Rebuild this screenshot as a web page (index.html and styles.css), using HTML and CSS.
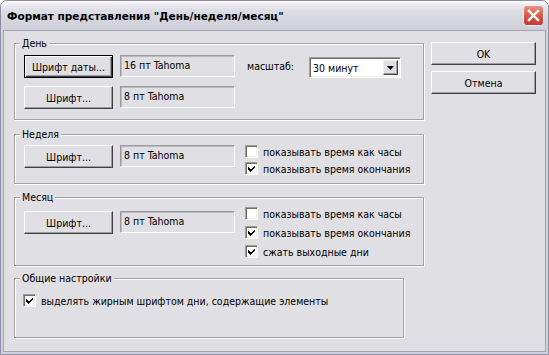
FILE: index.html
```html
<!DOCTYPE html>
<html>
<head>
    <meta charset="utf-8">
    <link rel="stylesheet" href="styles.css">
</head>
<body>
    <div class="window">
        <div class="titlebar">
            <span class="title">Формат представления "День/неделя/месяц"</span>
            <span class="close-btn">
                <svg width="21" height="21" viewBox="0 0 21 21">
                    <defs>
                        <linearGradient id="closeGrad" x1="0" y1="0" x2="0" y2="1">
                            <stop offset="0" stop-color="#ec9486"/>
                            <stop offset="0.5" stop-color="#d65a4d"/>
                            <stop offset="1" stop-color="#c13a2f"/>
                        </linearGradient>
                    </defs>
                    <rect x="0.5" y="0.5" width="20" height="20" rx="3" fill="url(#closeGrad)" stroke="#f4f4f8"/>
                    <path d="M6 6 L15 15 M15 6 L6 15" stroke="#fff" stroke-width="2.4" stroke-linecap="square"/>
                </svg>
            </span>
        </div>

        <div class="client">
            <div class="groups">
                <!-- День -->
                <fieldset class="group group-day">
                    <legend>День</legend>
                    <div class="day-rows">
                        <div class="row">
                            <button type="button" class="btn btn-font btn-default">Шрифт даты...</button>
                            <div class="field">16 пт Tahoma</div>
                            <span class="scale-label">масштаб:</span>
                            <div class="combo">
                                <span class="combo-text">30 минут</span>
                                <span class="combo-arrow">
                                    <svg width="7" height="4" viewBox="0 0 7 4"><path d="M0 0 H7 L3.5 4 Z" fill="#000"/></svg>
                                </span>
                            </div>
                        </div>
                        <div class="row">
                            <button type="button" class="btn btn-font">Шрифт...</button>
                            <div class="field">8 пт Tahoma</div>
                        </div>
                    </div>
                </fieldset>

                <!-- Неделя -->
                <fieldset class="group group-week">
                    <legend>Неделя</legend>
                    <div class="row">
                        <div class="font-pick">
                            <button type="button" class="btn btn-font">Шрифт...</button>
                            <div class="field">8 пт Tahoma</div>
                        </div>
                        <div class="checks">
                            <label class="check"><span class="box"></span>показывать время как часы</label>
                            <label class="check"><span class="box checked"><svg width="7" height="7" viewBox="0 0 7 7"><path d="M0 2 L2.5 4.5 L7 0 V3 L2.5 7 L0 4.6 Z" fill="#000"/></svg></span>показывать время окончания</label>
                        </div>
                    </div>
                </fieldset>

                <!-- Месяц -->
                <fieldset class="group group-month">
                    <legend>Месяц</legend>
                    <div class="row">
                        <div class="font-pick">
                            <button type="button" class="btn btn-font">Шрифт...</button>
                            <div class="field">8 пт Tahoma</div>
                        </div>
                        <div class="checks">
                            <label class="check"><span class="box"></span>показывать время как часы</label>
                            <label class="check"><span class="box checked"><svg width="7" height="7" viewBox="0 0 7 7"><path d="M0 2 L2.5 4.5 L7 0 V3 L2.5 7 L0 4.6 Z" fill="#000"/></svg></span>показывать время окончания</label>
                            <label class="check"><span class="box checked"><svg width="7" height="7" viewBox="0 0 7 7"><path d="M0 2 L2.5 4.5 L7 0 V3 L2.5 7 L0 4.6 Z" fill="#000"/></svg></span>сжать выходные дни</label>
                        </div>
                    </div>
                </fieldset>

                <!-- Общие настройки -->
                <fieldset class="group group-general">
                    <legend>Общие настройки</legend>
                    <label class="check"><span class="box checked"><svg width="7" height="7" viewBox="0 0 7 7"><path d="M0 2 L2.5 4.5 L7 0 V3 L2.5 7 L0 4.6 Z" fill="#000"/></svg></span>выделять жирным шрифтом дни, содержащие элементы</label>
                </fieldset>
            </div>

            <div class="actions">
                <button type="button" class="btn btn-wide">OK</button>
                <button type="button" class="btn btn-wide">Отмена</button>
            </div>
        </div>
    </div>
</body>
</html>
```

FILE: styles.css
```css
body {
    margin: 0;
    background-color: #fff;
    font-family: "DejaVu Sans Condensed", "DejaVu Sans", sans-serif;
    font-size: 10.5px;
    color: #000;
}
.window {
    width: 549px;
    height: 355px;
    box-sizing: border-box;
    border: 1px solid #8e8fa6;
    border-radius: 7px 7px 0 0;
    background-color: #d2d2dd;
    display: flex;
    flex-direction: column;
    overflow: hidden;
}
.titlebar {
    height: 29px;
    flex: none;
    display: flex;
    align-items: center;
    justify-content: space-between;
    padding: 0 4px 0 6px;
    background: linear-gradient(#ffffff 0, #eeeef3 3px, #dedee6 9px, #d6d6df 18px, #cfcfda 100%);
}
.title {
    font-family: "DejaVu Sans", sans-serif;
    font-weight: bold;
    font-size: 10.5px;
}
.close-btn {
    display: block;
    width: 21px;
    height: 21px;
}
.client {
    flex: 1;
    margin: 0 2px 2px;
    border: 1px solid #a3a3b5;
    background-color: #e0dfe3;
    display: flex;
    align-items: flex-start;
    padding: 6px 9px 0 10px;
}
.groups {
    width: 410px;
    display: flex;
    flex-direction: column;
}
.actions {
    margin-left: 7px;
    padding-top: 5px;
    display: flex;
    flex-direction: column;
    gap: 6px;
}

/* group boxes */
.group {
    margin: 0;
    padding: 0 0 0 9px;
    min-width: 0;
    border: 1px solid #a3a3a7;
    box-shadow: inset 1px 1px 0 #fff, 1px 1px 0 #fff;
}
.group legend {
    padding: 0 2px;
    margin-left: -4px;
    line-height: 13px;
    background-color: #e0dfe3;
}
.group-day {
    padding-top: 5px;
    padding-bottom: 10px;
}
.group-week {
    margin-top: 8px;
    padding-top: 3px;
    padding-bottom: 6px;
}
.group-month {
    margin-top: 7px;
    padding-bottom: 4px;
}
.group-general {
    width: 390px;
    box-sizing: border-box;
    margin-top: 6px;
    padding: 7px 0 28px 8px;
}
.group-general legend {
    margin-left: -3px;
}
.day-rows {
    display: flex;
    flex-direction: column;
    gap: 8px;
}
.row {
    display: flex;
    align-items: flex-start;
}
.font-pick {
    display: flex;
    align-items: flex-start;
}
.group-week .font-pick {
    margin-top: 1px;
}
.group-month .font-pick {
    margin-top: 7px;
}

/* buttons */
.btn {
    box-sizing: border-box;
    margin: 0;
    padding: 0;
    font: inherit;
    color: #000;
    background-color: #e0dfe3;
    border: 1px solid;
    border-color: #fff #404040 #404040 #fff;
    box-shadow: inset -1px -1px 0 #9d9da1;
}
.btn-font {
    width: 89px;
    height: 23px;
}
.btn-default {
    border-color: #000;
    box-shadow: inset 1px 1px 0 #fff, inset -1px -1px 0 #404040, inset -2px -2px 0 #9d9da1;
}
.btn-wide {
    width: 105px;
    height: 23px;
}

/* read-only text fields */
.field {
    box-sizing: border-box;
    width: 115px;
    height: 22px;
    margin-left: 7px;
    padding: 0 0 2px 3px;
    display: flex;
    align-items: center;
    border: 1px solid;
    border-color: #9d9da1 #fff #fff #9d9da1;
    box-shadow: inset 1px 1px 0 #b8b8bd;
}
.scale-label {
    width: 62px;
    margin-left: 12px;
    line-height: 23px;
}
.combo {
    box-sizing: border-box;
    width: 92px;
    height: 21px;
    margin-top: 2px;
    display: flex;
    align-items: center;
    background-color: #fff;
    border: 1px solid;
    border-color: #9d9da1 #fff #fff #9d9da1;
    box-shadow: inset 1px 1px 0 #716f64, inset -1px -1px 0 #f1efe2;
    padding: 2px 2px 2px 3px;
}
.combo-text {
    flex: 1;
}
.combo-arrow {
    box-sizing: border-box;
    width: 15px;
    height: 15px;
    display: flex;
    align-items: center;
    justify-content: center;
    background-color: #e0dfe3;
    border: 1px solid;
    border-color: #f1efe2 #404040 #404040 #f1efe2;
    box-shadow: inset -1px -1px 0 #9d9da1;
}

/* check boxes */
.checks {
    margin-left: 10px;
    margin-top: -1px;
    display: flex;
    flex-direction: column;
}
.group-month .checks {
    margin-top: 0;
}
.check {
    height: 17px;
    display: flex;
    align-items: center;
}
.group-month .check {
    height: 19px;
}
.box {
    box-sizing: border-box;
    width: 13px;
    height: 13px;
    margin-right: 5px;
    display: flex;
    align-items: center;
    justify-content: center;
    background-color: #fff;
    border: 1px solid;
    border-color: #9d9da1 #fff #fff #9d9da1;
    box-shadow: inset 1px 1px 0 #716f64, inset -1px -1px 0 #f1efe2;
}
.box svg {
    shape-rendering: crispEdges;
}
```
